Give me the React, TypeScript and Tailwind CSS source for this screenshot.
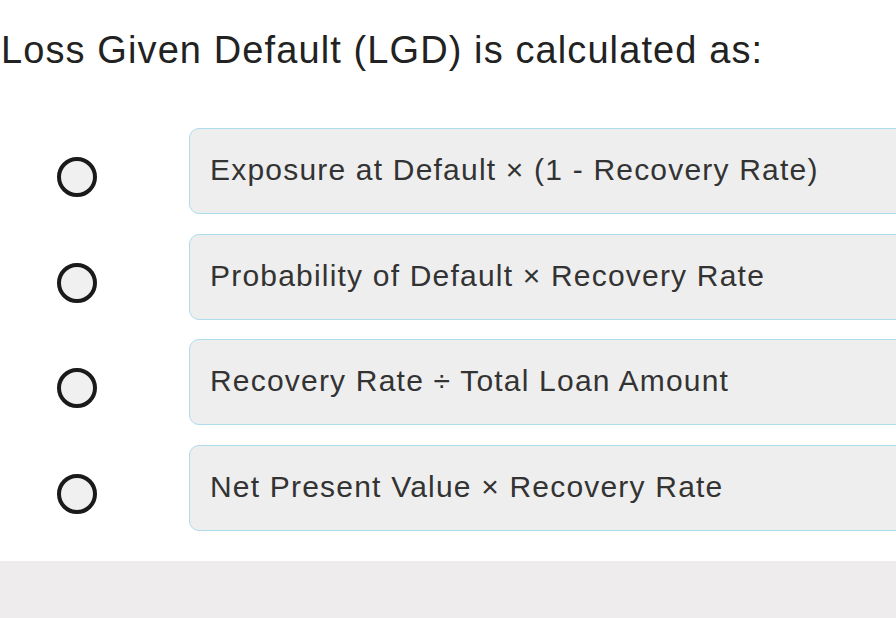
import React from "react";

const options = [
  "Exposure at Default × (1 - Recovery Rate)",
  "Probability of Default × Recovery Rate",
  "Recovery Rate ÷ Total Loan Amount",
  "Net Present Value × Recovery Rate",
];

function Option({ label }: { label: string }) {
  return (
    <div className="flex items-center">
      <div className="flex w-[189px] shrink-0 justify-center pr-[36px] pt-[12px]">
        <span className="block h-[40px] w-[40px] rounded-full border-[4px] border-[#1a1a1a] bg-[#f0f0f0]" />
      </div>
      <div className="flex h-[86px] w-[730px] shrink-0 items-center rounded-[10px] border-[1.5px] border-[#addcef] bg-[#eeeeee] pb-[3px] pl-[20px] text-[30px] tracking-[1.2px] text-[#333333]">
        {label}
      </div>
    </div>
  );
}

export default function App() {
  return (
    <div className="h-[618px] w-[896px] overflow-hidden bg-white font-['Liberation_Sans',Arial,sans-serif]">
      <h1 className="pl-[1px] pt-[28px] text-[38px] leading-[44px] tracking-[1.1px] text-[#222222]">
        Loss Given Default (LGD) is calculated as:
      </h1>
      <div className="mt-[56px] flex flex-col gap-[19.5px]">
        {options.map((o) => (
          <Option key={o} label={o} />
        ))}
      </div>
      <div className="mt-[30px] h-[60px] bg-[#eeeced]" />
    </div>
  );
}
